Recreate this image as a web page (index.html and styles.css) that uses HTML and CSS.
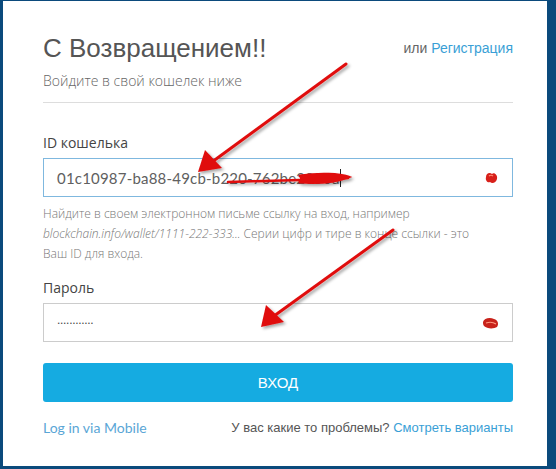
FILE: index.html
```html
<!DOCTYPE html>
<html lang="ru">
<head>
  <meta charset="UTF-8">
  <title>Вход в кошелек</title>
  <link rel="stylesheet" href="styles.css">
</head>
<body>

  <div class="frame">
    <div class="login">

      <div class="head">
        <h1>С Возвращением!!</h1>
        <div class="signup">или <a href="#">Регистрация</a></div>
      </div>
      <p class="subtitle">Войдите в свой кошелек ниже</p>

      <div class="field">
        <label>ID кошелька</label>
        <div class="input input-id">
          <span class="value">01c10987-ba88-49cb-b220-762be2050a</span>
          <span class="caret"></span>
          <svg class="ext-icon" width="16" height="14" viewBox="0 0 16 14">
            <path d="M2 6 C2 2 6 1 8 3 C10 1 14 4 13 8 C12 12 8 13 6 11 C4 12 1 10 2 6 Z" fill="#d8201a"/>
            <path d="M5 5 C6 4 8 4 9 5" stroke="#ff8a70" stroke-width="1.2" fill="none"/>
          </svg>
        </div>
        <p class="hint">
          Найдите в своем электронном письме ссылку на вход, например
          <i>blockchain.info/wallet/1111-222-333...</i> Серии цифр и тире в конце ссылки - это
          Ваш ID для входа.
        </p>
      </div>

      <div class="field">
        <label>Пароль</label>
        <div class="input input-pass">
          <span class="value dots">............</span>
          <svg class="ext-icon" width="18" height="14" viewBox="0 0 18 14">
            <path d="M1 6 C2 2 8 1 12 3 C16 4 17 8 15 11 C12 13 5 13 2 10 C1 9 1 7 1 6 Z" fill="#c8221a"/>
            <path d="M4 7 C7 6 11 6 14 8" stroke="#ff9a80" stroke-width="1.2" fill="none"/>
          </svg>
        </div>
      </div>

      <button class="btn-login">ВХОД</button>

      <div class="foot">
        <a href="#" class="mobile">Log in via Mobile</a>
        <span>У вас какие то проблемы? <a href="#">Смотреть варианты</a></span>
      </div>

    </div>

    <!-- красные стрелки поверх скриншота -->
    <svg class="marks" width="556" height="469" viewBox="0 0 556 469">
      <defs>
        <filter id="sh" x="-20%" y="-20%" width="140%" height="140%">
          <feDropShadow dx="2" dy="2" stdDeviation="1.5" flood-color="#000" flood-opacity="0.35"/>
        </filter>
      </defs>
      <g filter="url(#sh)" fill="#e01010" stroke="#e01010" stroke-linecap="round">
        <line x1="346" y1="64" x2="212" y2="162" stroke-width="3"/>
        <polygon points="198,172 205,150 222,168" stroke="none"/>
        <line x1="393" y1="230" x2="274" y2="316" stroke-width="3"/>
        <polygon points="261,327 266,305 284,322" stroke="none"/>
        <path d="M228 182 L300 180 L348 178" stroke-width="2.5" fill="none"/>
        <path d="M300 176 C320 173 340 174 348 177 C335 182 315 183 300 182" stroke-width="3" fill="#e01010"/>
      </g>
    </svg>
  </div>

</body>
</html>
```

FILE: styles.css
```css
body {
  margin: 0;
  font-family: 'Open Sans', 'Liberation Sans', sans-serif;
  background: #0b4a7c;
}

.frame {
  position: relative;
  width: 544px;
  height: 465px;
  margin: 1px 0 0 3px;
  background: #fff;
  overflow: hidden;
}

.login {
  padding: 32px 34px 0 40px;
  color: #555;
}

.head {
  display: flex;
  justify-content: space-between;
  align-items: center;
}

.head h1 {
  margin: 0;
  font-family: 'Liberation Sans', Arial, sans-serif;
  font-size: 26px;
  line-height: 30px;
  font-weight: normal;
  color: #555;
}

.signup {
  font-family: 'Liberation Sans', Arial, sans-serif;
  font-size: 14px;
  color: #666;
}

a {
  color: #3a9fd6;
  text-decoration: none;
}

.subtitle {
  margin: 8px 0 0;
  padding-bottom: 11px;
  font-size: 14px;
  line-height: 20px;
  font-weight: 300;
  color: #666;
  border-bottom: 1px solid #ddd;
}

.field label {
  display: block;
  margin-top: 30px;
  margin-bottom: 5px;
  font-size: 14px;
  line-height: 20px;
  color: #444;
}

.field + .field label {
  margin-top: 14px;
}

.input {
  display: flex;
  align-items: center;
  height: 37px;
  padding: 0 12px 0 13px;
  border: 1px solid #ccc;
  font-size: 15px;
  color: #555;
}

.input-id {
  border-color: #7fb8df;
}

.value {
  font-family: 'Lato', 'Open Sans', sans-serif;
  letter-spacing: 0.2px;
  color: #606060;
  white-space: nowrap;
}

.caret {
  width: 1px;
  height: 18px;
  background: #222;
}

.dots {
  font-family: 'Liberation Sans', sans-serif;
  font-size: 12px;
  letter-spacing: -0.3px;
  color: #444;
  margin-top: -6px;
}

.ext-icon {
  margin-left: auto;
}

.hint {
  max-width: 450px;
  margin: 7px 0 0;
  font-size: 12px;
  line-height: 20px;
  font-weight: 300;
  color: #777;
}

.btn-login {
  display: block;
  width: 100%;
  height: 39px;
  margin-top: 21px;
  border: none;
  border-radius: 3px;
  background: #15abe1;
  color: #fff;
  font-family: 'Liberation Sans', Arial, sans-serif;
  font-size: 15px;
}

.foot {
  display: flex;
  justify-content: space-between;
  margin-top: 16px;
  line-height: 20px;
  font-family: 'Liberation Sans', Arial, sans-serif;
  font-size: 13px;
  color: #555;
}

.foot .mobile {
  font-family: 'Lato', sans-serif;
  font-size: 14px;
  color: #5aa6d6;
}

.marks {
  position: absolute;
  left: -3px;
  top: -1px;
  pointer-events: none;
}
```
